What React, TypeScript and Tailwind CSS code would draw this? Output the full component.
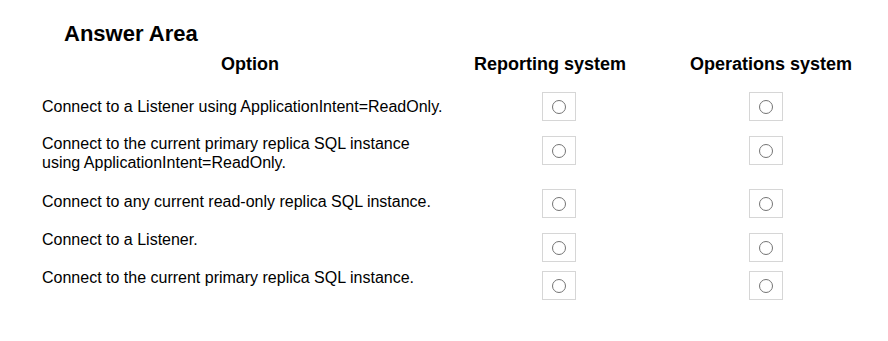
import React from 'react';

type Row = {
  lines: string[];
  height: string;
  textTop: string;
  boxTop: string;
};

const rows: Row[] = [
  { lines: ['Connect to a Listener using ApplicationIntent=ReadOnly.'], height: 'h-[42px]', textTop: 'mt-[5px]', boxTop: 'mt-0' },
  {
    lines: ['Connect to the current primary replica SQL instance', 'using ApplicationIntent=ReadOnly.'],
    height: 'h-[55px]',
    textTop: 'mt-0',
    boxTop: 'mt-[2px]',
  },
  { lines: ['Connect to any current read-only replica SQL instance.'], height: 'h-[41px]', textTop: 'mt-[3px]', boxTop: 'mt-0' },
  { lines: ['Connect to a Listener.'], height: 'h-[38px]', textTop: 'mt-0', boxTop: 'mt-[3px]' },
  { lines: ['Connect to the current primary replica SQL instance.'], height: 'h-[38px]', textTop: 'mt-0', boxTop: 'mt-[3px]' },
];

const RadioBox: React.FC<{ className?: string }> = ({ className = '' }) => (
  <div className={`w-[34px] h-[29px] border border-[#d6d6d6] flex items-center justify-center shrink-0 ${className}`}>
    <div className="w-[14px] h-[14px] rounded-full border border-[#747474]" />
  </div>
);

export default function App() {
  return (
    <div className="w-[888px] h-[341px] bg-white text-black font-['Liberation_Sans',Arial,sans-serif] overflow-hidden">
      {/* Title */}
      <div className="pt-[22px] pl-[64px] text-[22px] leading-[24px] font-bold">Answer Area</div>

      {/* Column headers */}
      <div className="flex mt-[8px] pl-[42px] text-[18px] leading-[20px] font-bold">
        <div className="w-[416px] text-center">Option</div>
        <div className="w-[160px] ml-[12px] text-center">Reporting system</div>
        <div className="w-[170px] ml-[56px] text-center">Operations system</div>
      </div>

      {/* Options */}
      <div className="mt-[18px]">
        {rows.map((row, i) => (
          <div key={i} className={`flex items-start pl-[42px] ${row.height}`}>
            <div className={`w-[500px] text-[16px] leading-[19px] ${row.textTop}`}>
              {row.lines.map((line, j) => (
                <div key={j}>{line}</div>
              ))}
            </div>
            <RadioBox className={row.boxTop} />
            <RadioBox className={`ml-[173px] ${row.boxTop}`} />
          </div>
        ))}
      </div>
    </div>
  );
}
